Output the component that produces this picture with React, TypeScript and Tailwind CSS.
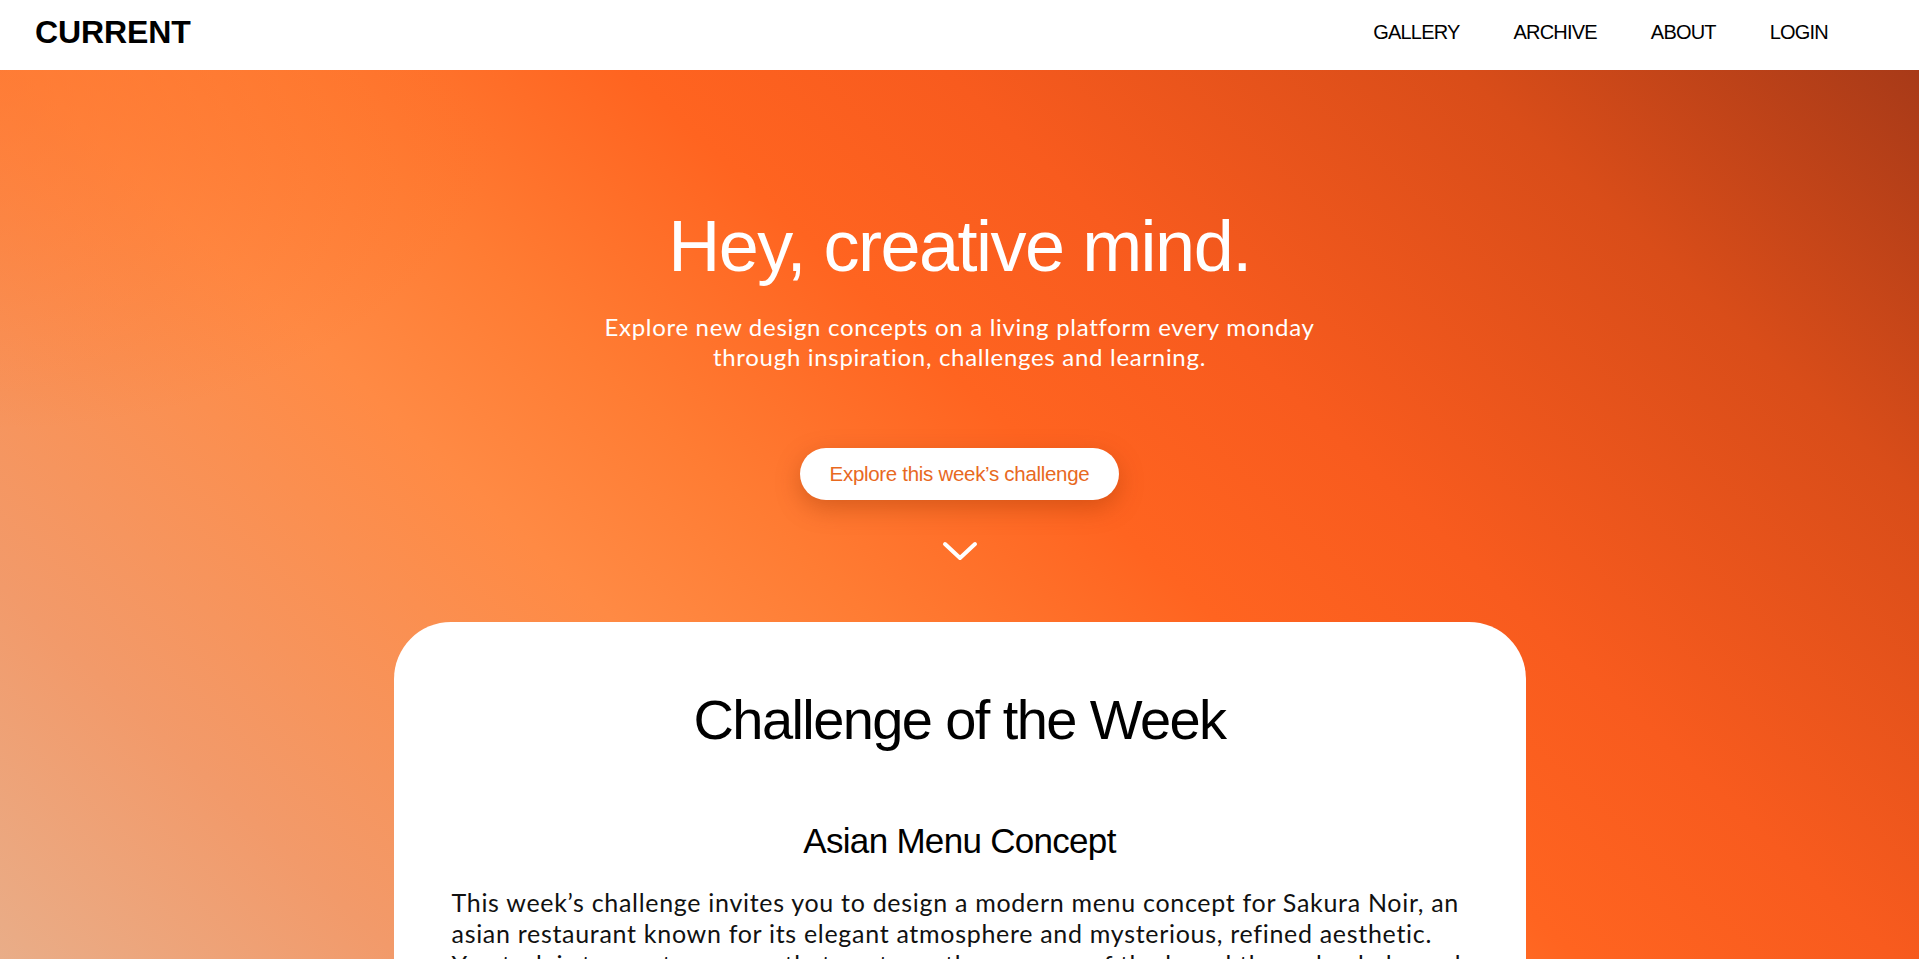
import React from 'react'

const navLinks = ['GALLERY', 'ARCHIVE', 'ABOUT', 'LOGIN']

function Header() {
  return (
    <header className="h-[70px] bg-white flex items-center justify-between pl-[35px] pr-[91px] pb-[6px]">
      <div className="font-['Liberation_Sans',Arial,sans-serif] font-bold text-[32px] leading-none tracking-[-0.1px] text-black">
        CURRENT
      </div>
      <nav className="flex items-center gap-[54px]">
        {navLinks.map(link => (
          <a
            key={link}
            href="#"
            className="font-['Liberation_Sans',Arial,sans-serif] text-[20px] leading-none tracking-[-0.8px] text-black"
          >
            {link}
          </a>
        ))}
      </nav>
    </header>
  )
}

function ChevronDown() {
  return (
    <svg width="38" height="22" viewBox="0 0 38 22" fill="none">
      <polyline
        points="4,4 19,18 34,4"
        stroke="white"
        strokeWidth="4"
        strokeLinecap="round"
        strokeLinejoin="round"
      />
    </svg>
  )
}

function ChallengeCard() {
  return (
    <div className="w-[1132px] mx-auto bg-white rounded-[57px] pt-[70px] pb-[80px] px-[58px] text-black">
      <h2 className="font-['Liberation_Sans',Arial,sans-serif] text-[56px] leading-none tracking-[-1.6px] text-center">
        Challenge of the Week
      </h2>
      <h3 className="mt-[75px] font-['Liberation_Sans',Arial,sans-serif] text-[35px] leading-none tracking-[-0.7px] text-center">
        Asian Menu Concept
      </h3>
      <p className="mt-[29px] font-['Lato',sans-serif] text-[25px] leading-[31px] tracking-[0.7px] text-[#111]">
        This week’s challenge invites you to design a modern menu concept for Sakura Noir, an
        <br />
        asian restaurant known for its elegant atmosphere and mysterious, refined aesthetic.
        <br />
        You task is to create a menu that captures the essence of the brand through a balanced
        blend of tradition and modernity, with clear hierarchy and thoughtful typography.
      </p>
    </div>
  )
}

export default function App() {
  return (
    <div className="min-h-screen bg-white">
      <Header />
      <main className="bg-[#ff5f1f] bg-no-repeat bg-[length:100%_889px] bg-[image:radial-gradient(ellipse_520px_360px_at_0%_0%,rgba(255,112,40,0.55),rgba(255,112,40,0)),linear-gradient(43deg,#e9ad88_0%,#f29a6a_14%,#ff8a44_34%,#ff7c33_43%,#ff6420_55%,#f85b1e_66%,#d94d19_84%,#a83a18_100%)] pb-[120px]">
        <section className="flex flex-col items-center pt-[140px]">
          <h1 className="font-['Liberation_Sans',Arial,sans-serif] text-[72px] leading-none tracking-[-1.5px] text-white">
            Hey, creative mind.
          </h1>
          <p className="mt-[30px] font-['Lato',sans-serif] text-[24px] leading-[30px] tracking-[0.7px] text-white text-center">
            Explore new design concepts on a living platform every monday
            <br />
            through inspiration, challenges and learning.
          </p>
          <button className="mt-[76px] h-[52px] px-[30px] rounded-full bg-white font-['Liberation_Sans',Arial,sans-serif] text-[20.5px] tracking-[-0.3px] text-[#e8691f] shadow-[0_8px_24px_rgba(140,50,0,0.35)]">
            Explore this week’s challenge
          </button>
          <div className="mt-[40px]">
            <ChevronDown />
          </div>
        </section>
        <div className="mt-[60px]">
          <ChallengeCard />
        </div>
      </main>
    </div>
  )
}
